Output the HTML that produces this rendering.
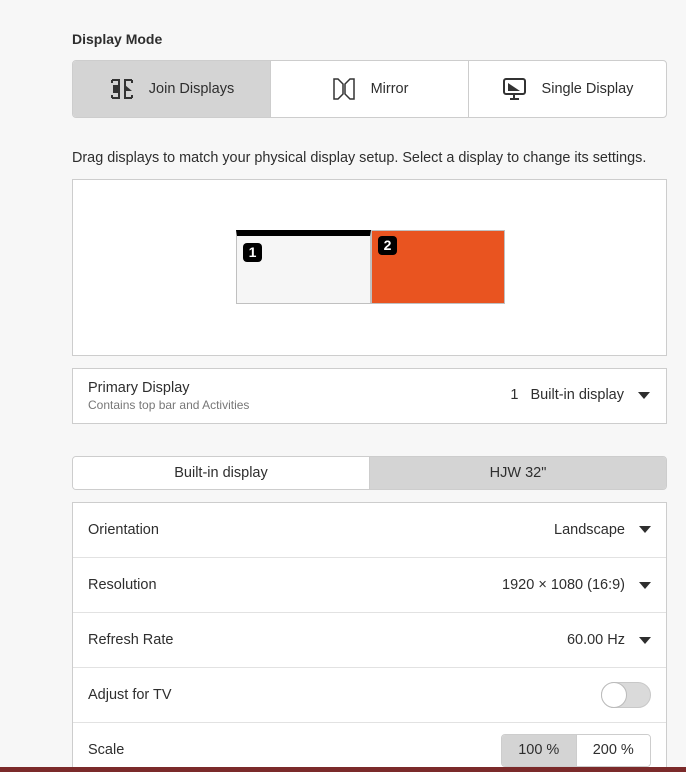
<!DOCTYPE html>
<html style="overflow:hidden"><head><style>
*{box-sizing:border-box;margin:0;padding:0}
html,body{width:686px;height:772px;overflow:hidden}
body{background:#f7f7f7;font-family:"Liberation Sans",sans-serif;font-size:14.5px;color:#2e2e2e;position:relative}
.abs{position:absolute}
.h{left:72px;top:31px;font-weight:bold;font-size:14px}
.mode{left:72px;top:60px;width:595px;height:58px;border:1px solid #cdcdcd;border-radius:4px;background:#fff;display:flex;overflow:hidden}
.mode div{flex:1;display:flex;align-items:center;justify-content:center;gap:14px;border-left:1px solid #cdcdcd}
.mode div:first-child{border-left:none;background:#d4d4d4}
.desc{left:72px;top:150px;font-size:14.4px;white-space:nowrap}
.arr{left:72px;top:179px;width:595px;height:177px;background:#fff;border:1px solid #cdcdcd}
.card{background:#fff;border:1px solid #cdcdcd}
.tri{display:inline-block;width:0;height:0;border-left:6px solid transparent;border-right:6px solid transparent;border-top:7px solid #2e2e2e;margin-left:14px;vertical-align:middle}
.row{position:absolute;left:0;right:0;height:55px;border-top:1px solid #e2e2e2;display:flex;align-items:center;justify-content:space-between;padding:0 15px}
.num{position:absolute;width:19px;height:19px;background:#000;color:#fff;border-radius:4px;font-weight:bold;font-size:14px;text-align:center;line-height:19px}
</style></head><body>
<div class="abs h">Display Mode</div>
<div class="abs mode">
<div><svg width="26" height="24" viewBox="0 0 26 24" fill="none" stroke="#333" stroke-width="2"><path d="M3 3h7M3 21h7M16 3h7M16 21h7M3 3v3M3 21v-3M23 3v3M23 21v-3M10 2v20M16 2v20"/><path d="M4 8h6v8H4z" fill="#333" stroke="none"/><path d="M16 8l7 6h-7z" fill="#333" stroke="none"/></svg>Join Displays</div>
<div><svg width="26" height="24" viewBox="0 0 26 24" fill="none" stroke="#333" stroke-width="1.5"><path d="M3 2h4l5 5v10l-5 5H3zM23 2h-4l-5 5v10l5 5h4z"/></svg>Mirror</div>
<div><svg width="26" height="24" viewBox="0 0 26 24" fill="none" stroke="#333" stroke-width="2"><rect x="2" y="2" width="21" height="15" rx="2"/><path d="M6 6l12 8H6z" fill="#333" stroke="none"/><path d="M12 17v4M8 22h9"/></svg>Single Display</div>
</div>
<div class="abs desc">Drag displays to match your physical display setup. Select a display to change its settings.</div>
<div class="abs arr"></div>
<div class="abs" style="left:236px;top:230px;width:135px;height:74px;background:#f6f6f6;border:1px solid #c0c0c0;border-top:6px solid #000"></div>
<div class="abs" style="left:371px;top:230px;width:134px;height:74px;background:#e95420;border:1px solid #c0c0c0"></div>
<div class="num" style="left:243px;top:243px">1</div>
<div class="num" style="left:378px;top:236px">2</div>
<div class="abs card" style="left:72px;top:368px;width:595px;height:56px">
<div class="abs" style="left:15px;top:11px">Primary Display</div>
<div class="abs" style="left:15px;top:29px;font-size:12px;color:#777">Contains top bar and Activities</div>
<div class="abs" style="right:16px;top:18px">1&nbsp;&nbsp;&nbsp;Built-in display<span class="tri"></span></div>
</div>
<div class="abs" style="left:72px;top:456px;width:595px;height:34px;border:1px solid #cdcdcd;border-radius:4px;display:flex;overflow:hidden">
<div style="flex:1;background:#fff;display:flex;align-items:center;justify-content:center">Built-in display</div>
<div style="flex:1;background:#d4d4d4;border-left:1px solid #cdcdcd;display:flex;align-items:center;justify-content:center">HJW 32"</div>
</div>
<div class="abs card" style="left:72px;top:502px;width:595px;height:280px">
<div class="row" style="top:-1px;border-top:none"><span>Orientation</span><span>Landscape<span class="tri"></span></span></div>
<div class="row" style="top:54px"><span>Resolution</span><span>1920 × 1080 (16:9)<span class="tri"></span></span></div>
<div class="row" style="top:109px"><span>Refresh Rate</span><span>60.00 Hz<span class="tri"></span></span></div>
<div class="row" style="top:164px"><span>Adjust for TV</span><span style="width:50px;height:26px;border-radius:13px;background:#dadada;border:1px solid #c8c8c8;position:relative"><span style="position:absolute;left:-1px;top:-1px;width:26px;height:26px;border-radius:13px;background:#fff;border:1px solid #bbb"></span></span></div>
<div class="row" style="top:219px"><span>Scale</span><span style="display:flex;width:150px;height:33px;border:1px solid #cdcdcd;border-radius:4px;overflow:hidden"><span style="flex:1;background:#d4d4d4;display:flex;align-items:center;justify-content:center">100 %</span><span style="flex:1;background:#fff;border-left:1px solid #cdcdcd;display:flex;align-items:center;justify-content:center">200 %</span></span></div>
</div>
<div class="abs" style="left:0;top:767px;width:686px;height:5px;background:#7b2a2a"></div>
</body></html>
